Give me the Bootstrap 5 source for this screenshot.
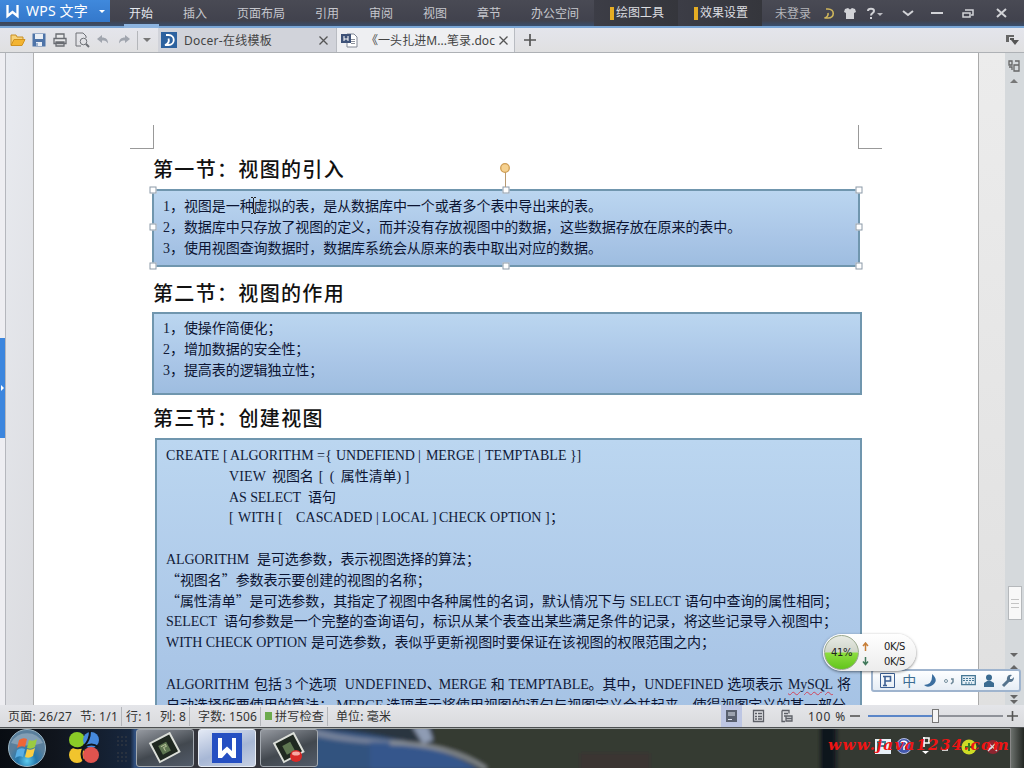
<!DOCTYPE html>
<html lang="zh-CN">
<head>
  <meta charset="UTF-8" />
  <meta name="viewport" content="width=device-width, initial-scale=1.0"/>
  <title>WPS 文字</title>
  <link href="https://cdn.jsdelivr.net/npm/bootstrap@5.3.3/dist/css/bootstrap.min.css" rel="stylesheet">
  <style>
    body {
      width: 1024px;
      height: 768px;
      font-family: "Noto Sans", "Noto Sans CJK SC", sans-serif;
      font-size: 12px;
      line-height: 1;
      color: #333;
    }
    svg { display: block; flex: none; }
    .fit { display: inline-block; white-space: pre; flex: none; }

    /* title bar */
    .title-bar { height: 28px; background: linear-gradient(#494a54, #41424d 80%, #3a4d69 98%); border-bottom: 2px solid #7aa6d6; color: #c6c7cd; }
    .app-button { width: 110px; height: 22px; background: linear-gradient(#4089dc, #3478cb); color: #fff; font-size: 14px; }
    .menu-tabs { margin-left: 4px; }
    .menu-tab { padding: 0 15px; height: 26px; line-height: 28px; }
    .menu-tab.current { color: #e4e7ee; position: relative; }
    .menu-tab.current::after { content: ""; position: absolute; left: 10px; right: 9px; bottom: -2px; height: 4px; background: #8db4e0; }
    .tool-tab { width: 84px; height: 26px; padding-left: 16px; color: #dcdde0; background: linear-gradient(90deg, #3c3d46, #35363c); gap: 2px; }
    .tool-tab i { width: 4px; height: 13px; background: #e5ad23; }
    .login { margin-left: 13px; width: 36px; height: 12px; color: #b4b5ba; }

    /* quick bar and document tabs */
    .quick-bar { height: 25px; background: linear-gradient(#e4e5ec, #e0e0e1); border-bottom: 1px solid #aeb1b5; }
    .quick-icons { padding-left: 8px; width: 137px; }
    .quick-icons svg { margin-right: 5px; }
    .doc-tab { height: 24px; border-right: 1px solid #b9bcc2; font-size: 12px; color: #444; }
    .doc-tab .fit { padding-top: 2px; }
    .tab-online { width: 179px; background: #d1d3da; padding-left: 3px; }
    .tab-open { width: 178px; background: #eeeff2; padding-left: 4px; }
    .tab-open .fit { margin-left: 7px; letter-spacing: 0; }

    /* workspace */
    .workspace { height: 652px; background: #ececec; }
    .side-strip { width: 6px; background: #eeeef2; border-right: 1px solid #b5b7bd; padding-top: 285px; }
    .side-grip { width: 5px; height: 100px; background: #3c86de; }
    .gutter-left { width: 28px; background: linear-gradient(100deg, #e9ebf0, #dadbdf); border-right: 1px solid #b2b2b2; }
    .paper { width: 945px; background: #fff; border-right: 1px solid #aaa; padding-top: 72px; }
    .gutter-right { width: 26px; background: linear-gradient(#ececec, #e0e0e0); }
    .scroll-col { width: 19px; background: #d5d9dc; }
    .scroll-thumb { width: 14px; height: 34px; background: #f8f8f8; border: 1px solid #b5b8bb; margin-top: 499px; gap: 3px; }
    .scroll-thumb i { width: 8px; height: 1px; background: #c4c4c4; }

    .crop-marks { padding: 0 96px; }
    .crop { width: 24px; height: 24px; border-bottom: 1px solid #999; }
    .crop-l { border-right: 1px solid #999; }
    .crop-r { border-left: 1px solid #999; }
    .section-title { margin: 0 0 0 119px; font: 500 20px "Liberation Serif", "Noto Sans CJK SC", serif; color: #111; white-space: nowrap; }
    .title-1 { height: 40px; line-height: 42px; }
    .title-2 { height: 45px; line-height: 54px; }
    .title-3 { height: 43px; line-height: 48px; }
    .text-frame {
      margin-left: 118px;
      width: 710px;
      border: 2px solid #7096ae;
      background: linear-gradient(#bbd6f0, #aac6e7 60%, #9ebde0);
      padding: 4px 0 0 9px;
      color: #111a38;
      font: 14px "Liberation Serif", "Noto Sans CJK SC", serif;
    }
    .frame-1 { width: 708px; height: 78px; position: relative; padding-top: 5px; }
    .frame-2 { height: 83px; }
    .frame-3 { margin-left: 121px; width: 707px; height: 367px; padding-top: 5px; }
    .doc-line { height: 20.8px; line-height: 20.8px; white-space: nowrap; display: flex; }
    .doc-line .han { font-family: "Noto Sans CJK SC", sans-serif; font-weight: 400; line-height: 18.4px; color: #0c1432; }
    .doc-line .latin { line-height: 21.4px; }
    .doc-line .indent { padding-left: 63px; }
    .typo { text-decoration: underline wavy #d0455a 1px; text-underline-offset: 2px; }

    .handle { position: absolute; width: 7px; height: 7px; background: #fff; border: 1px solid #8c9aa8; transform: translate(-50%, -50%); }
    .h-l { left: -1px; } .h-c { left: 352px; } .h-r { left: 705px; }
    .v-t { top: -1px; } .v-m { top: 36px; } .v-b { top: 75px; }
    .rotate-knob { position: absolute; left: 345px; top: -29px; }
    .text-cursor { position: absolute; left: 96px; top: 6px; }

    /* floating widgets */
    .net-ball { position: absolute; left: 823px; top: 634px; width: 93px; height: 37px; border-radius: 19px; background: linear-gradient(#fff, #ececec); box-shadow: 0 1px 3px rgba(0,0,0,.5); color: #222; font: 10px "DejaVu Sans", sans-serif; }
    .ball-face { width: 35px; height: 35px; margin: 1px 0 0 1px; border-radius: 50%; border: 1px solid #9aa98e; background: linear-gradient(#e8ebe4 0, #cfd5ca 48%, #8ddd3f 52%, #62c51c); }
    .ball-rows { padding: 7px 0 0 3px; gap: 5px; }
    .ball-rows > div { height: 10px; gap: 15px; }
    .ime-bar { position: absolute; left: 871px; top: 669px; width: 150px; height: 23px; background: linear-gradient(#fdfeff, #e6edf5); border: 2px solid #9fb4ce; border-radius: 3px; padding: 0 5px 0 6px; color: #3c6d94; font-size: 14px; }

    /* status bar */
    .status-bar { height: 23px; background: linear-gradient(#e4e5e9, #d9dadd); border-bottom: 1px solid #4d5052; color: #333; }
    .status-bar .fit { padding-top: 2px; }
    .gap-after { margin-right: 8px; }
    .gap-small { margin-right: 3px; }
    .sep { width: 1px; height: 19px; background: #b4b6ba; }
    .spell-dot { width: 7px; height: 8px; background: #6caa4c; margin: 0 3px 0 4px; }
    .view-now { width: 21px; height: 22px; background: #bdc6e3; }
    .zoom-track { width: 135px; height: 15px; background: linear-gradient(90deg, #5b86c8 0 65px, #8f9299 65px) center / 100% 2px no-repeat; padding-left: 64px; }
    .zoom-thumb { width: 7px; height: 14px; background: #f5f5f5; border: 1px solid #777; }

    /* taskbar */
    .task-bar { height: 40px; background: #343932; position: relative; overflow: hidden; }
    .wallpaper { position: absolute; left: 0; top: 0; }
    .task-row { position: relative; height: 40px; }
    .task-btn { width: 58px; height: 38px; margin-right: 4px; border: 1px solid #a3a9b0; border-radius: 3px; background: linear-gradient(160deg, #9599a0, #42484f 55%, #525b69); }
    .task-btn.active { background: linear-gradient(160deg, #e3e9f5, #a7b7d5 55%, #c6d0e3); border-color: #e8edf5; }
    .tray { position: absolute; left: 870px; top: 6px; }
    .show-desk { position: absolute; right: 0; top: 0; width: 14px; height: 40px; border-left: 1px solid #888; background: linear-gradient(90deg, #6b706c, #222622); }
    .site-mark { position: absolute; left: 828px; top: 9px; color: #f01414; font: italic 700 15px/16px "DejaVu Serif", serif; }
  </style>
</head>
<body class="m-0 overflow-hidden position-relative">

<header class="title-bar d-flex">
  <div class="app-button d-flex align-items-center">
    <svg width="26" height="22" viewBox="0 0 26 22"><path d="M7.500 5v11l5-4 5 4V5" fill="none" stroke="#fff" stroke-width="2.300"/></svg>
    <span class="fit" data-w="62">WPS 文字</span>
    <svg class="ms-auto me-1" width="7" height="5" viewBox="0 0 7 5"><path d="M0 1h6l-3 3z" fill="#fff"/></svg>
  </div>
  <nav class="menu-tabs d-flex" id="menu"></nav>
  <div class="tool-tab d-flex align-items-center"><i></i><span>绘图工具</span></div>
  <div class="tool-tab d-flex align-items-center"><i></i><span>效果设置</span></div>
  <div class="login mt-2"><span>未登录</span></div>
  <svg width="213" height="26" viewBox="811 0 213 26" fill="none" stroke="#d2d3d7" stroke-width="2">
    <path d="M826 9h2c7 0 7 9 0 9h-3.500c3-1 4-2.500 3.500-5" stroke="#d0b75c" stroke-width="1.600"/>
    <path d="M845 9l3-1 2 1.500 2-1.500 3 1 1 3-2 1v6h-8v-6l-2-1z" fill="#d2d3d7" stroke="none"/>
    <path d="M868 11c0-3 6-3 6 0 0 2-3 2-3 4.500M871 17v2"/>
    <path d="M877 13h6l-3 3z" fill="#b9bac0" stroke="none"/>
    <path d="M903 11l5 4 5-4M931 13h12"/>
    <path d="M965 10h8v5h-2M963 13h7v4h-7z" stroke-width="1.500"/>
    <path d="M997 9l9 8M1006 9l-9 8"/>
  </svg>
</header>

<div class="quick-bar d-flex align-items-center">
  <div class="quick-icons d-flex align-items-center">
    <svg width="18" height="16" viewBox="0 0 18 16"><path d="M3 13V3h5l1 2h6v3" fill="#f7d27a" stroke="#c98f24"/><path d="M3 13.500l3-6h11l-3 6z" fill="#f3b431" stroke="#d0921f"/></svg>
    <svg width="16" height="16" viewBox="0 0 16 16"><path d="M1.500 1.500h13v13h-13z" fill="#4e74a8"/><path d="M4 2h8v5H4zM5 10h6v4H5z" fill="#e9eef5"/><path d="M6 11v3" stroke="#4e74a8"/></svg>
    <svg width="16" height="16" viewBox="0 0 16 16"><path d="M4 6V2h8v4M2 6.500h12v5H2zM4 10h8v4H4z" fill="#e8e9eb" stroke="#696c72" stroke-width="1.300"/></svg>
    <svg width="17" height="16" viewBox="0 0 17 16" fill="none" stroke="#6e7177"><path d="M13 6V4l-3-3H3v13h5"/><circle cx="10.500" cy="9.500" r="3.300"/><path d="M13 12l3 3" stroke-width="2"/></svg>
    <svg width="16" height="16" viewBox="0 0 16 16"><path d="M2 7l5-4v2.500c4 0 6 2 6 6-1.500-2.500-3-3-6-3V11z" fill="#a0a5ae"/></svg>
    <svg width="16" height="16" viewBox="0 0 16 16"><path d="M14 7L9 3v2.500c-4 0-6 2-6 6 1.500-2.500 3-3 6-3V11z" fill="#a0a5ae"/></svg>
  </div>
  <div class="sep"></div>
  <svg width="20" height="6" viewBox="0 0 20 6"><path d="M5 1h8L9 5z" fill="#777"/></svg>
  <div class="doc-tab tab-online d-flex align-items-center">
    <svg width="23" height="16" viewBox="0 0 23 16"><path d="M0 0h16v16H0z" fill="#2d629f"/><path d="M5 3h2.500c7 0 7 10 0 10H4c3.500-1.500 4.500-3.500 3.500-6.500" fill="none" stroke="#fff" stroke-width="1.800"/></svg>
    <span class="fit" data-w="88">Docer-在线模板</span>
    <svg class="ms-auto me-2" width="9" height="9" viewBox="0 0 9 9"><path d="M.5.5l8 8M8.500.5l-8 8" stroke="#555" stroke-width="1.300"/></svg>
  </div>
  <div class="doc-tab tab-open d-flex align-items-center">
    <svg width="18" height="16" viewBox="0 0 18 16"><path d="M6 2h7l3 3v10H6z" fill="#fff" stroke="#808794"/><path d="M10 7.500h4M10 9.500h4M10 11.500h4" stroke="#8c919b"/><path d="M0 2h10v9H0z" fill="#3e5278"/><path d="M3 4v5M7 4v5M3 7h4" stroke="#fff"/></svg>
    <span class="fit" data-w="129">《一头扎进M...笔录.doc</span>
    <svg class="ms-auto me-1" width="11" height="9" viewBox="0 0 11 9"><path d="M.5.5l8 8M8.500.5l-8 8" stroke="#555" stroke-width="1.300"/></svg>
  </div>
  <svg class="ms-2" width="14" height="14" viewBox="0 0 14 14"><path d="M7 1v12M1 7h12" stroke="#555" stroke-width="1.700"/></svg>
  <svg class="ms-auto me-1" width="15" height="12" viewBox="0 0 15 12"><path d="M1 1h8v2H4v5H1z" fill="#666"/><path d="M5 4h4v2H5zM6 6h8l-4 5z" fill="#555"/></svg>
</div>

<main class="workspace d-flex">
  <div class="side-strip">
    <div class="side-grip d-flex align-items-center"><svg width="5" height="6" viewBox="0 0 5 6"><path d="M1 0l3 3-3 3z" fill="#fff"/></svg></div>
  </div>
  <div class="gutter-left"></div>
  <article class="paper overflow-hidden">
    <div class="crop-marks d-flex justify-content-between"><div class="crop crop-l"></div><div class="crop crop-r"></div></div>
    <h2 class="section-title title-1"><span class="fit" data-w="192">第一节：视图的引入</span></h2>
    <section class="text-frame frame-1">
      <div id="frame1"></div>
      <div class="handle h-l v-t"></div><div class="handle h-c v-t"></div><div class="handle h-r v-t"></div>
      <div class="handle h-l v-m"></div><div class="handle h-r v-m"></div>
      <div class="handle h-l v-b"></div><div class="handle h-c v-b"></div><div class="handle h-r v-b"></div>
      <svg class="rotate-knob" width="12" height="26" viewBox="0 0 12 26"><path d="M6.500 10v15" stroke="#b89a72"/><circle cx="6" cy="6" r="4.300" fill="#f5d190" stroke="#cf9c52" stroke-width="1.300"/></svg>
      <svg class="text-cursor" width="7" height="17" viewBox="0 0 7 17"><path d="M1 .5h2M4 .5h2M3.500 1v15M1 16.500h2M4 16.500h2" stroke="#222"/></svg>
    </section>
    <h2 class="section-title title-2"><span class="fit" data-w="192">第二节：视图的作用</span></h2>
    <section class="text-frame frame-2"><div id="frame2"></div></section>
    <h2 class="section-title title-3"><span class="fit" data-w="171">第三节：创建视图</span></h2>
    <section class="text-frame frame-3"><div id="frame3"></div></section>
  </article>
  <div class="gutter-right"></div>
  <div class="scroll-col d-flex flex-column align-items-center">
    <svg width="19" height="34" viewBox="0 0 19 34"><path d="M4 8h3v4H4zM10 8h4v4M4 14h3v3M9 12h5v6H9z" fill="none" stroke="#666" stroke-width="1.300"/><path d="M5 30l4-4 4 4z" fill="#777"/></svg>
    <div class="scroll-thumb d-flex flex-column align-items-center justify-content-center"><i></i><i></i><i></i></div>
    <svg width="19" height="85" viewBox="0 0 19 85"><path d="M5 33h8l-4 4zM5 49h8l-4-4zM5 75h8l-4 4zM5 80h8l-4 4z" fill="#666"/></svg>
  </div>
</main>

<footer class="status-bar d-flex align-items-center">
  <span class="fit ms-2 gap-after" data-w="64">页面: 26/27</span>
  <span class="fit gap-small" data-w="38">节: 1/1</span>
  <span class="sep me-1"></span>
  <span class="fit gap-after" data-w="26">行: 1</span>
  <span class="fit gap-small" data-w="26">列: 8</span>
  <span class="sep me-2"></span>
  <span class="fit gap-small" data-w="59">字数: 1506</span>
  <span class="sep"></span>
  <span class="spell-dot"></span>
  <span class="fit gap-small" data-w="49">拼写检查</span>
  <span class="sep me-2"></span>
  <span class="fit" data-w="55">单位: 毫米</span>
  <div class="ms-auto d-flex align-items-center">
    <div class="view-now d-flex align-items-center justify-content-center"><svg width="11" height="12" viewBox="0 0 11 12"><path d="M0 0h11v12H0z" fill="#59606f"/><path d="M2 3h7M2 5h7M2 9.500h4" stroke="#dfe4f0"/></svg></div>
    <svg width="66" height="14" viewBox="742 0 66 14"><path d="M753.500 1.500h10v11h-10zM755 4.500h2M758 4.500h4M755 7.500h2M758 7.500h4M755 10h2M758 10h4" fill="none" stroke="#5d6067" stroke-width="1.300"/><path d="M782 1.500h7v3M782 1.500v11h3M784 4.500h4M784 7h3M786 7h6v5h-6zM786 9.500h6" fill="none" stroke="#5d6067" stroke-width="1.300"/></svg>
    <span class="fit" data-w="42">100 % </span>
    <svg width="18" height="12" viewBox="0 0 18 12"><path d="M0 6h10" stroke="#555" stroke-width="1.600"/></svg>
    <div class="zoom-track"><div class="zoom-thumb"></div></div>
    <svg width="21" height="12" viewBox="0 0 21 12"><path d="M4 6h11M9.500 1v10" stroke="#555" stroke-width="1.600"/></svg>
  </div>
</footer>

<div class="task-bar">
  <svg class="wallpaper" width="1024" height="40" viewBox="0 0 1024 40">
    <defs>
      <linearGradient id="sky" x2="1"><stop stop-color="#080c12"/><stop offset=".13" stop-color="#10151d"/><stop offset=".3" stop-color="#17263d"/><stop offset=".31" stop-color="#31507f"/><stop offset=".42" stop-color="#33343b"/></linearGradient>
      <filter id="soft"><feGaussianBlur stdDeviation="2"/></filter>
    </defs>
    <path d="M0 0h435v40H0z" fill="url(#sky)"/>
    <g filter="url(#soft)">
      <path d="M433 -4h400v48H490q-22-23-57-26z" fill="#343a33"/>
      <path d="M314 -4h119v28H314z" fill="#2c3440"/>
      <path d="M314 0q50 4 75 10l30 6v26H314z" fill="#33527f"/>
      <path d="M314 1q40 10 90 12l10 4q-60 0-100-9z" fill="#76829a"/>
      <path d="M412 -2h16l5 14-10 4z" fill="#8f9cb4"/>
      <path d="M370 14q70 0 110 28H370z" fill="#34578c"/>
      <path d="M390 15q60 1 96 26" fill="none" stroke="#8d9296" stroke-width="4"/>
      <path d="M580 25h70v17h-70z" fill="#3b3532"/>
      <path d="M820 -4h16v48h-16z" fill="#10141b"/>
    </g>
    <path d="M0 .5h1024" stroke="#a6aaa9"/>
  </svg>
  <div class="task-row d-flex align-items-center">
    <svg width="136" height="40" viewBox="0 0 136 40">
      <defs><radialGradient id="orb" cy=".85"><stop stop-color="#5ecdf0"/><stop offset=".5" stop-color="#2577ab"/><stop offset="1" stop-color="#5a7f9c"/></radialGradient></defs>
      <circle cx="27" cy="20" r="18.500" fill="url(#orb)" stroke="#9bb6c5"/>
      <path d="M11 15a18 18 0 0 1 32 0q-16 5-32 0z" fill="#fff" opacity=".25"/>
      <path d="M19 12q4-3 8-1l-2 8q-4-2-8 1z" fill="#ee6636"/><path d="M29 12q4 2 8-1l-2 8q-4 3-8 1z" fill="#9acb42"/><path d="M17 22q4-3 8-1l-2 8q-4-2-8 1z" fill="#58aee5"/><path d="M27 21q4 2 8-1l-2 8q-4 3-8 1z" fill="#f9cd43"/>
      <circle cx="77" cy="12" r="8" fill="#8acb27"/><circle cx="91" cy="12" r="8" fill="#4689dc"/><circle cx="77" cy="27" r="8" fill="#f1c42d"/><circle cx="91" cy="27" r="8" fill="#e0534e"/>
      <path d="M69 17q9 6 15 1 6-6 6-15M84 19q8-5 14 0M84 19q-5 7 0 15" fill="none" stroke="#10151b" stroke-width="2"/>
      <path d="M117 9h11M117 13h11M117 17h11M117 25h11M117 29h11M117 33h11" stroke="#3a3f45" stroke-dasharray="2 2"/>
    </svg>
    <div class="task-btn d-flex align-items-center justify-content-center"><svg width="34" height="32" viewBox="0 0 34 32"><g transform="rotate(-28 17 16)"><path d="M6 5h22v21H6z" fill="#1f2820" stroke="#dcdfd9" stroke-width="2"/><path d="M12 11h9v10h-9z" fill="#5e7651"/><path d="M14 13h5v2h-3v4" fill="none" stroke="#b4bf98"/></g></svg></div>
    <div class="task-btn active d-flex align-items-center justify-content-center"><svg width="30" height="30" viewBox="0 0 30 30"><path d="M0 0h30v30H0z" fill="#254fc2"/><path d="M6 5h4v13l5-4.500 5 4.500V5h4v20h-4l-5-5.500-5 5.500H6z" fill="#fff"/></svg></div>
    <div class="task-btn d-flex align-items-center justify-content-center"><svg width="34" height="32" viewBox="0 0 34 32"><g transform="rotate(-28 17 16)"><path d="M6 5h22v21H6z" fill="#1f2820" stroke="#dcdfd9" stroke-width="2"/><path d="M12 11h9v10h-9z" fill="#5e7651"/></g><circle cx="24" cy="24" r="6" fill="#d82a28"/><ellipse cx="24" cy="21.500" rx="4" ry="2" fill="#f7a9a4"/></svg></div>
  </div>
  <svg class="tray" width="136" height="26" viewBox="870 0 136 26">
    <path d="M875 5h16v15h-16z" fill="#e8f1f7"/><path d="M878 17V8h7v4h-5" fill="none" stroke="#3f8099" stroke-width="2"/>
    <circle cx="904" cy="12" r="7.500" fill="#4258ad" stroke="#b6bee0"/><path d="M901 9c1-3 6-2 6 1l-3 3v3" fill="none" stroke="#fff" stroke-width="1.500"/>
    <path d="M924 3v10M923 4h6v5h-5M942 16h6" stroke="#fff" stroke-width="1.600" fill="none"/><path d="M922 17h7l-3.500 3z" fill="#fff"/>
    <circle cx="969" cy="13" r="7.500" fill="#cfdc25"/><path d="M969 9v8M965 13h8" stroke="#357a24" stroke-width="2"/>
    <circle cx="993" cy="13" r="7" fill="#8e2530"/><path d="M988 9l9 8M997 8l-9 9M987 14h5" stroke="#ddd" stroke-width="1.300"/>
  </svg>
  <div class="show-desk"></div>
  <div class="site-mark"><span class="fit" data-w="182">www.java1234.com</span></div>
</div>

<div class="ime-bar d-flex align-items-center justify-content-between">
  <svg width="17" height="17" viewBox="0 0 17 17" fill="none" stroke="#3c5f93"><path d="M1.500 1.500h14v14h-14z"/><path d="M6 14V4.500h5.500v4.500H6M4 4.500h2M4 13.500h4" stroke-width="1.600"/></svg>
  <span>中</span>
  <svg width="14" height="15" viewBox="0 0 14 15"><path d="M9 1q8 7-1 12-4 2-7-1 9 0 8-11z" fill="#3b6e9f"/></svg>
  <svg width="12" height="12" viewBox="0 0 12 12"><circle cx="3" cy="6" r="1.500" fill="none" stroke="#77909f"/><path d="M8 4h2v3l-2 2" fill="none" stroke="#6b8596" stroke-width="1.500"/></svg>
  <svg width="15" height="11" viewBox="0 0 15 11"><path d="M.7.7h13.600v9H.7z" fill="#e2edf5" stroke="#477895" stroke-width="1.300"/><path d="M2 3.500h11M2 5.500h11M4 8h7" stroke="#477895" stroke-dasharray="2 1"/></svg>
  <svg width="12" height="14" viewBox="0 0 12 14"><circle cx="6" cy="3.500" r="3" fill="#3b6b91"/><path d="M1 13V9l4-2.500h2L11 9v4z" fill="#3b6b91"/></svg>
  <svg width="13" height="14" viewBox="0 0 13 14"><path d="M2 12l6-6" stroke="#55738d" stroke-width="3"/><path d="M11 1L9 3v2h2l2-2q0 5-4 5-4-1-3-4 1-4 5-3z" fill="#55738d"/></svg>
</div>

<div class="net-ball d-flex">
  <div class="ball-face d-flex align-items-center justify-content-center"><span class="fit" data-w="21">41%</span></div>
  <div class="ball-rows d-flex flex-column">
    <div class="d-flex align-items-center"><svg width="7" height="9" viewBox="0 0 7 9"><path d="M3.500 1v8M1 4l2.500-3L6 4" fill="none" stroke="#c77e37" stroke-width="1.500"/></svg><span class="fit" data-w="21">0K/S</span></div>
    <div class="d-flex align-items-center"><svg width="7" height="9" viewBox="0 0 7 9"><path d="M3.500 0v7M1 4.500l2.500 3 2.500-3" fill="none" stroke="#3f7759" stroke-width="1.500"/></svg><span class="fit" data-w="21">0K/S</span></div>
  </div>
</div>

<script src="https://cdn.jsdelivr.net/npm/bootstrap@5.3.3/dist/js/bootstrap.bundle.min.js"></script>
<script>
  const menu = ["开始", "插入", "页面布局", "引用", "审阅", "视图", "章节", "办公空间"];
  document.getElementById("menu").innerHTML = menu
    .map((name, i) => `<span class="menu-tab${i === 0 ? " current" : ""}">${name}</span>`).join("");

  // every line is a list of runs: plain text, or [text, width in px]
  const frames = {
    frame1: [
      [["1", 7], "，视图是一种虚拟的表，是从数据库中一个或者多个表中导出来的表。"],
      [["2", 7], "，数据库中只存放了视图的定义，而并没有存放视图中的数据，这些数据存放在原来的表中。"],
      [["3", 7], "，使用视图查询数据时，数据库系统会从原来的表中取出对应的数据。"]
    ],
    frame2: [
      [["1", 7], "，使操作简便化；"],
      [["2", 7], "，增加数据的安全性；"],
      [["3", 7], "，提高表的逻辑独立性；"]
    ],
    frame3: [
      [["CREATE ", 57], ["[ ", 7], ["ALGORITHM ", 87], ["={ ", 19], ["UNDEFIEND ", 82], ["| ", 8], ["MERGE ", 52], ["| ", 7], ["TEMPTABLE ", 85], ["}]", 11]],
      [["", 63], ["VIEW", 37], [" ", 6], "视图名", [" [ ( ", 27], "属性清单", [") ]", 13]],
      [["", 63], ["AS SELECT", 72], [" ", 7], "语句"],
      [["", 63], ["[ ", 9], ["WITH ", 40], ["[   ", 18], ["CASCADED ", 80], ["| ", 6], ["LOCAL ", 50], ["] ", 7], ["CHECK ", 51], ["OPTION ", 55], ["]", 5], "；"],
      [],
      [["ALGORITHM", 83], ["  ", 8], "是可选参数，表示视图选择的算法；"],
      ["“视图名”参数表示要创建的视图的名称；"],
      ["“属性清单”是可选参数，其指定了视图中各种属性的名词，默认情况下与", [" ", 4], ["SELECT", 51], [" ", 4], "语句中查询的属性相同；"],
      [["SELECT", 51], ["  ", 7], "语句参数是一个完整的查询语句，标识从某个表查出某些满足条件的记录，将这些记录导入视图中；"],
      [["WITH CHECK OPTION", 141], [" ", 4], "是可选参数，表似乎更新视图时要保证在该视图的权限范围之内；"],
      [],
      [["ALGORITHM", 83], [" ", 5], "包括", [" 3 ", 13], "个选项", ["  ", 8], ["UNDEFINED", 82], ["、", 12], ["MERGE", 48], [" ", 4], "和", [" ", 4], ["TEMPTABLE", 80], "。其中，", ["UNDEFINED", 79], [" ", 4], "选项表示", [" ", 5], ["MySQL", 45, "typo"], [" ", 4], "将"],
      ["自动选择所要使用的算法；", [" MERGE ", 53], "选项表示将使用视图的语句与视图定义合并起来，使得视图定义的某一部分"]
    ]
  };

  function renderRun(run) {
    const [text, width, extra] = Array.isArray(run) ? run : [run, run.length * 13.93];
    if (!text) return `<span class="indent"></span>`;
    const kind = /[\u3000-\uffef\u201c]/.test(text) ? "han" : "latin";
    return `<span class="fit ${kind} ${extra || ""}" data-w="${width}">${text}</span>`;
  }

  for (const id in frames) {
    document.getElementById(id).innerHTML = frames[id]
      .map(line => `<div class="doc-line">${line.map(renderRun).join("")}</div>`).join("");
  }

  // spread or tighten the letters of a run until it fills its width
  document.querySelectorAll(".fit").forEach(el => {
    const want = Number(el.dataset.w);
    const natural = el.getBoundingClientRect().width;
    el.style.letterSpacing = (want - natural) / el.textContent.length + "px";
    el.style.width = want + "px";
  });
</script>
</body>
</html>
